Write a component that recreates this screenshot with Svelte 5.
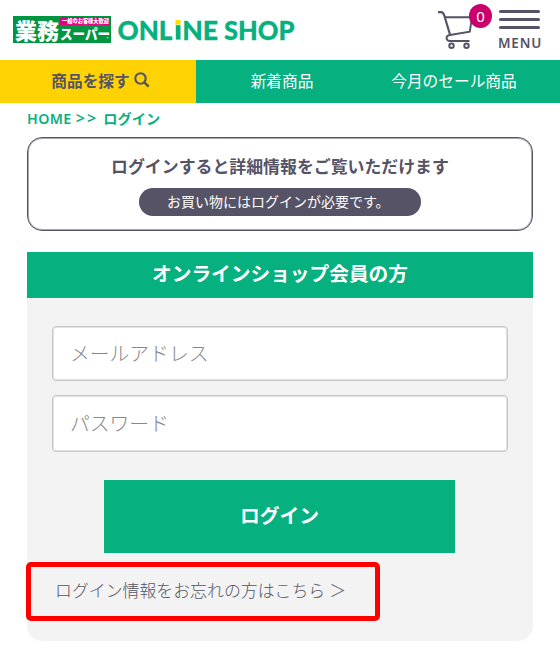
<script>
  let email = $state('');
  let password = $state('');
  let cartCount = $state(0);
</script>

<div class="page">
  <header>
    <a class="logo" href="#top" aria-label="業務スーパー ONLINE SHOP">
      <svg width="290" height="34" viewBox="0 0 290 34">
        <rect x="0" y="3" width="98" height="27" fill="#009641" />
        <rect x="47" y="4" width="50" height="8" fill="#e4007f" />
        <text class="cjk" x="2" y="25.5" font-size="22" textLength="44" lengthAdjust="spacingAndGlyphs">業務</text>
        <text class="cjk" x="49" y="10.3" font-size="5.5" textLength="47" lengthAdjust="spacingAndGlyphs">一般のお客様大歓迎</text>
        <text class="cjk" x="47" y="26" font-size="13.5" textLength="50" lengthAdjust="spacingAndGlyphs">スーパー</text>
        <circle cx="94.5" cy="24.8" r="1" fill="#6cc79b" />
        <text class="latin" x="104.5" y="26.5" font-size="27" textLength="55" lengthAdjust="spacingAndGlyphs">ONL</text>
        <rect x="162.8" y="12.2" width="4.7" height="14.4" fill="#06b07f" />
        <rect x="162.5" y="7" width="5" height="4.6" fill="#ffdc00" />
        <text class="latin" x="169.2" y="26.5" font-size="27" textLength="36" lengthAdjust="spacingAndGlyphs">NE</text>
        <text class="latin" x="211" y="26.5" font-size="27" textLength="70.5" lengthAdjust="spacingAndGlyphs">SHOP</text>
      </svg>
    </a>
    <div class="tools">
      <a class="cart" href="#cart" aria-label="cart">
        <svg width="38" height="40" viewBox="0 0 38 40" fill="none" stroke="#555365" stroke-width="2">
          <path d="M0 3.2h2.8c2 0 2.8 1 3.4 3L12 25.5" stroke-width="2.2" />
          <path d="M7 8.2h27L31.8 22.7 12 26c-2.7.5-3.5 1.6-3.5 2.8 0 2.2 1.5 3.2 3.5 3.2h19.5" stroke-width="1.9" />
          <circle cx="13.5" cy="36.7" r="2.2" />
          <circle cx="28.5" cy="36.7" r="2.2" />
        </svg>
        <span class="badge">{cartCount}</span>
      </a>
      <button class="menu" aria-label="MENU">
        <i></i>
        <i></i>
        <i></i>
        <span>MENU</span>
      </button>
    </div>
  </header>

  <nav>
    <a class="search" href="#search">
      商品を探す
      <svg width="16" height="16" viewBox="0 0 16 16" fill="none" stroke="#555365" stroke-width="2.1">
        <circle cx="6.5" cy="6.5" r="5.2" />
        <path d="M10.3 10.3l4.4 4.4" stroke-width="2.5" />
      </svg>
    </a>
    <a href="#new">新着商品</a>
    <a href="#sale">今月のセール商品</a>
  </nav>

  <main>
    <p class="crumbs"><span>HOME</span> <span class="sep">&gt;&gt;</span> ログイン</p>

    <section class="notice">
      <h2>ログインすると詳細情報をご覧いただけます</h2>
      <p>お買い物にはログインが必要です。</p>
    </section>

    <section class="panel">
      <h1>オンラインショップ会員の方</h1>
      <form>
        <input type="email" placeholder="メールアドレス" bind:value={email} />
        <input type="password" placeholder="パスワード" bind:value={password} />
        <button class="submit" type="button">ログイン</button>
      </form>
      <a class="forgot" href="#forgot">ログイン情報をお忘れの方はこちら <span>＞</span></a>
    </section>
  </main>
</div>

<style>
  :global(body) {
    background: #fff;
  }

  * {
    box-sizing: border-box;
  }

  .page {
    width: 560px;
    height: 658px;
    overflow: hidden;
    color: #555365;
    font-family: 'Noto Sans CJK JP', sans-serif;
  }

  a {
    color: inherit;
    text-decoration: none;
  }

  header {
    display: flex;
    justify-content: space-between;
    height: 60px;
    padding: 0 18px 0 13px;
  }

  .logo {
    padding-top: 13px;
  }

  .logo svg,
  .cart svg {
    display: block;
  }

  .cjk {
    fill: #fff;
    font-family: 'Noto Sans CJK JP', sans-serif;
    font-weight: 900;
  }

  .latin {
    fill: #06b07f;
    stroke: #06b07f;
    stroke-width: 0.3px;
    font-family: Lato, sans-serif;
    font-weight: 900;
  }

  .tools {
    display: flex;
  }

  .cart {
    position: relative;
    width: 59px;
    padding-top: 9px;
  }

  .badge {
    position: absolute;
    top: 4px;
    left: 31px;
    width: 23px;
    height: 24px;
    border-radius: 50%;
    background: #c9006b;
    color: #fff;
    font: 15px/24px 'Noto Sans', sans-serif;
    text-align: center;
  }

  .menu {
    display: flex;
    flex-direction: column;
    align-items: center;
    gap: 5px;
    width: 45px;
    padding: 10px 0 0;
    border: 0;
    background: none;
    color: #555365;
  }

  .menu i {
    width: 41px;
    height: 3px;
    border-radius: 2px;
    background: #555365;
  }

  .menu span {
    font: 600 13.5px/18px 'Noto Sans', sans-serif;
    letter-spacing: 0.8px;
    margin-right: -1px;
  }

  nav {
    display: grid;
    grid-template-columns: 196px 172px 172px;
    height: 43px;
    background: #06b07f;
    color: #fff;
    font-size: 15.7px;
  }

  nav a {
    display: flex;
    align-items: center;
    justify-content: center;
    padding-bottom: 3px;
  }

  nav .search {
    gap: 4px;
    padding-left: 5px;
    background: #ffd303;
    color: #555365;
    font-weight: 700;
  }

  main {
    padding: 0 27px;
  }

  .crumbs {
    height: 34px;
    margin: 0;
    color: #06b07f;
    font-size: 14.2px;
    font-weight: 700;
    line-height: 31px;
  }

  .crumbs span {
    font-family: 'Noto Sans', sans-serif;
    font-weight: 600;
    letter-spacing: 0.4px;
  }

  .crumbs .sep {
    margin: 0 2px 0 1px;
    font-size: 16px;
    letter-spacing: 2px;
    line-height: 1;
  }

  .notice {
    display: flex;
    flex-direction: column;
    align-items: center;
    height: 94px;
    padding-top: 16px;
    border: 1px solid #555365;
    border-radius: 15px;
    box-shadow: inset 0 0 0 1px #aaa9b2;
  }

  .notice h2 {
    margin: 0;
    font-size: 16.9px;
    line-height: 24px;
  }

  .notice p {
    width: 282px;
    height: 28px;
    margin: 10px 0 0;
    padding-left: 28px;
    border-radius: 14px;
    background: #555365;
    color: #fff;
    font-size: 14px;
    line-height: 26px;
    white-space: nowrap;
  }

  .panel {
    height: 389px;
    margin-top: 21px;
    border-radius: 0 0 15px 15px;
    background: #f3f3f3;
  }

  .panel h1 {
    height: 46px;
    margin: 0;
    background: #06b07f;
    color: #fff;
    font-size: 19.7px;
    line-height: 42px;
    text-align: center;
  }

  form {
    display: flex;
    flex-direction: column;
    padding: 28px 25px 0;
  }

  input {
    height: 55px;
    margin: 0 0 14px;
    padding: 0 17px 2px;
    border: 1px solid #c8c8c8;
    border-radius: 4px;
    background: #fff;
    box-shadow: inset 0 0 0 1px #e2e2e2;
    font: 300 19.8px 'Noto Sans CJK JP', sans-serif;
  }

  input[type='password'] {
    height: 57px;
    margin-bottom: 28px;
  }

  input::placeholder {
    color: #888;
  }

  .submit {
    align-self: center;
    width: 351px;
    height: 73px;
    margin-right: 1px;
    padding: 0 0 5px;
    border: 0;
    background: #06b07f;
    color: #fff;
    font: 700 19.8px 'Noto Sans CJK JP', sans-serif;
  }

  .forgot {
    display: flex;
    align-items: center;
    width: 354px;
    height: 59px;
    margin: 9px 0 0 -1px;
    padding: 0 0 4px 24px;
    border: 5px solid #f00;
    border-radius: 5px;
    font-size: 16.9px;
    font-weight: 300;
    white-space: nowrap;
  }

  .forgot span {
    margin-left: 4px;
  }
</style>
